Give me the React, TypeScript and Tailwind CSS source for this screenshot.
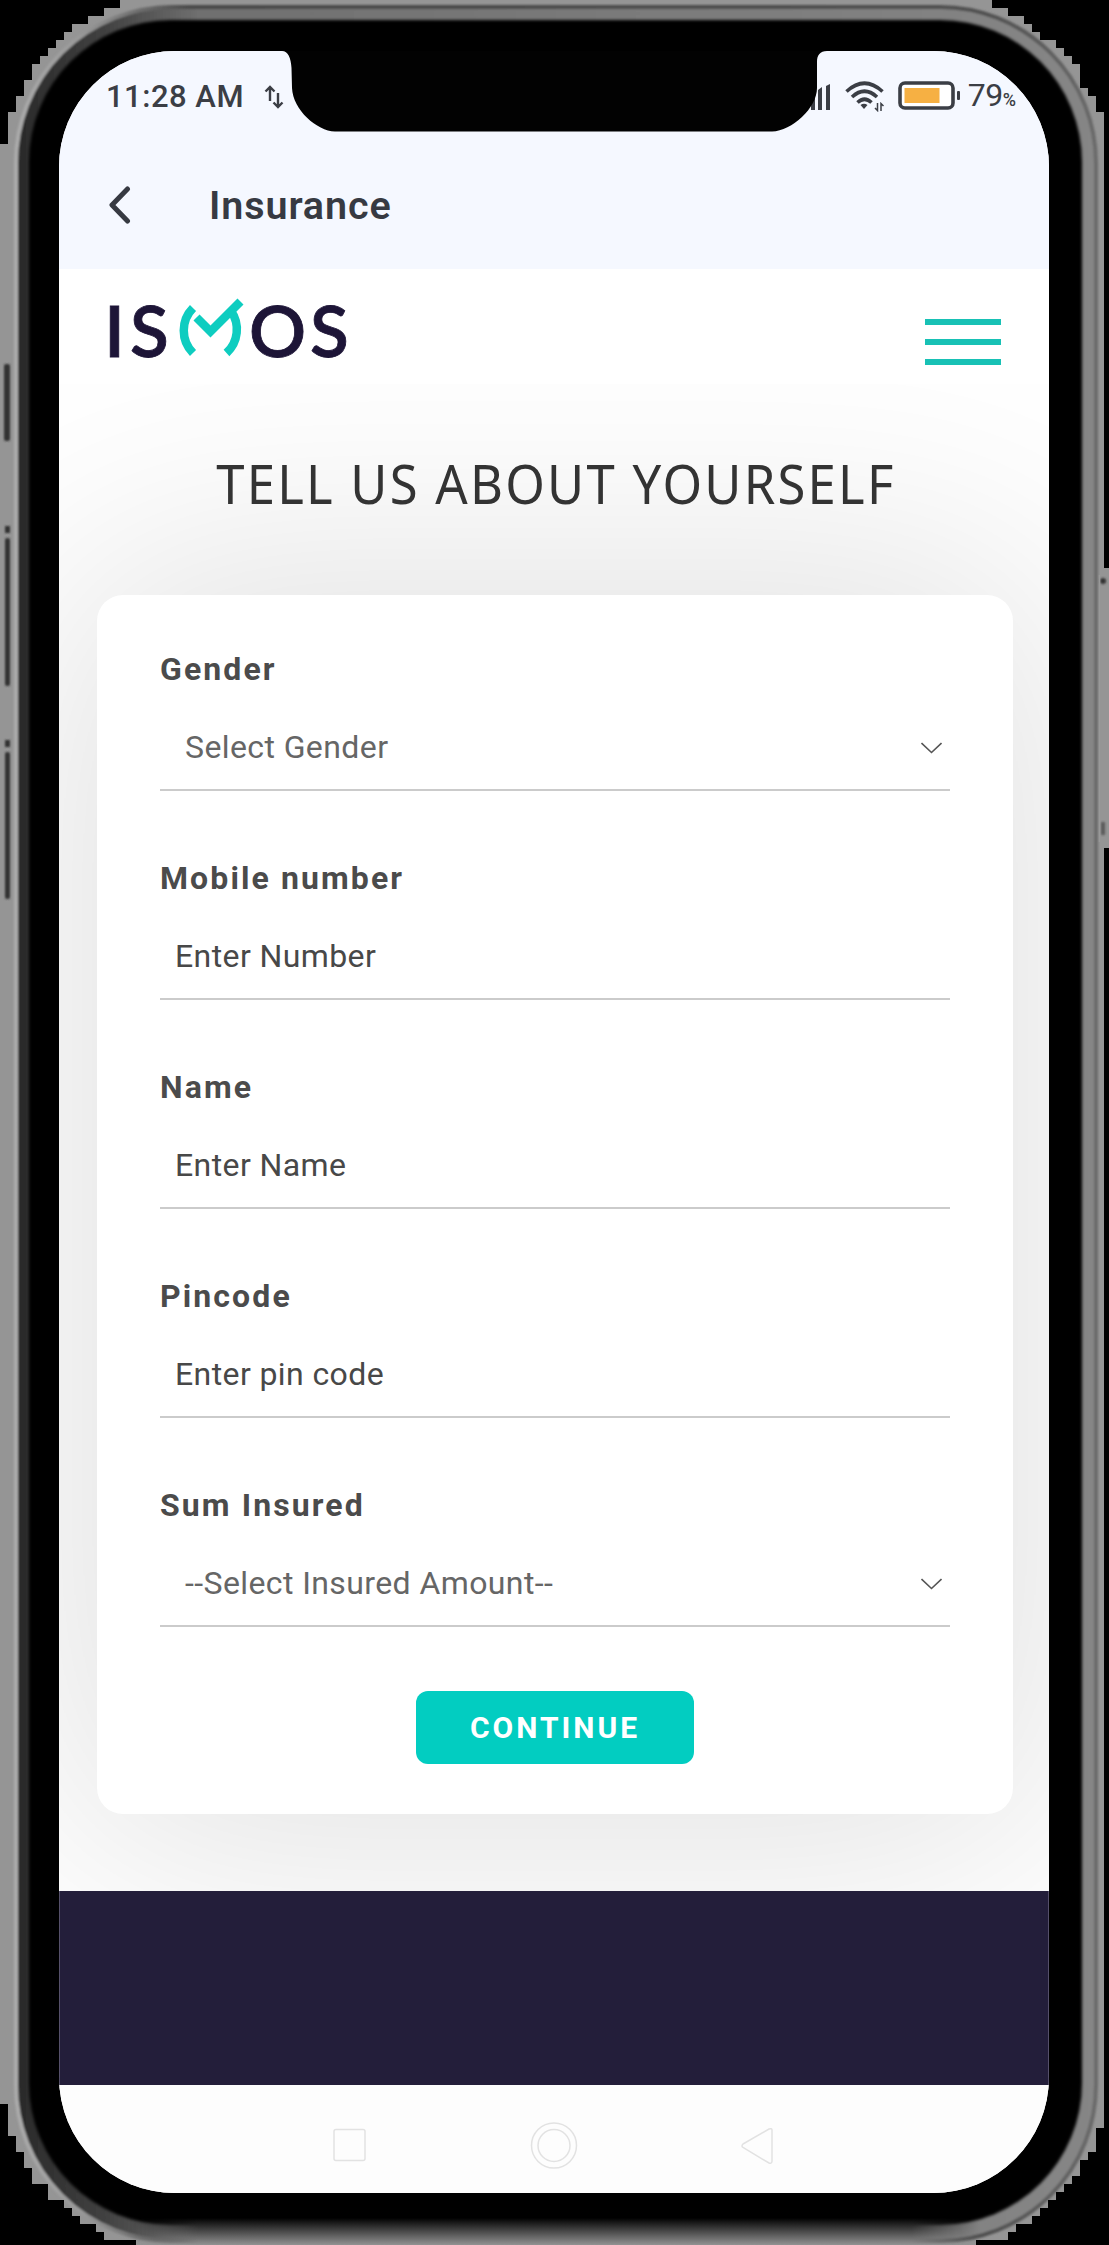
import React from "react";

type FieldProps = { label: string; text: string; select?: boolean };

function Field({ label, text, select }: FieldProps) {
  return (
    <div className="flex h-[209px] flex-col">
      <label className="h-[38px] text-[32px] leading-[38px] font-bold tracking-[2.1px] text-[#4b4b4b]">
        {label}
      </label>
      <div
        className={
          select
            ? "mt-[24px] flex h-[79px] items-center justify-between border-b-2 border-[#cbcbcb] pr-[8px] pl-[25px] text-[#666]"
            : "mt-[24px] flex h-[79px] items-center border-b-2 border-[#cbcbcb] pl-[15px] text-[#484848]"
        }
      >
        <span className="-mt-[8px] text-[32px] leading-[38px] tracking-[0.4px]">{text}</span>
        {select && (
          <svg width="21" height="12" viewBox="0 0 21 12" fill="none" stroke="#555" strokeWidth="1.6" className="-mt-[5px]">
            <path d="M0.5 1 L10.5 10.500 L20.5 1" />
          </svg>
        )}
      </div>
    </div>
  );
}

function PhoneBody() {
  return (
    <svg className="pointer-events-none absolute inset-0" width="1109" height="2245" viewBox="0 0 1109 2245">
      <defs>
        <linearGradient id="edge" x1="0" y1="0" x2="1" y2="0">
          <stop offset="0" stopColor="#acacac" />
          <stop offset="0.06" stopColor="#999" />
          <stop offset="0.16" stopColor="#4a4a4a" />
          <stop offset="0.9" stopColor="#505050" />
          <stop offset="1" stopColor="#6a6a6a" />
        </linearGradient>
        <linearGradient id="band" x1="0" y1="0" x2="1" y2="0">
          <stop offset="0" stopColor="#2a2a2a" />
          <stop offset="0.08" stopColor="#404040" />
          <stop offset="0.17" stopColor="#707070" />
          <stop offset="1" stopColor="#868686" />
        </linearGradient>
        <linearGradient id="foot" x1="0" y1="0" x2="0" y2="1">
          <stop offset="0" stopColor="#000" />
          <stop offset="0.5" stopColor="#4a4a4a" />
          <stop offset="1" stopColor="#929292" />
        </linearGradient>
        <linearGradient id="fade" x1="0" y1="0" x2="1" y2="0">
          <stop offset="0" stopColor="#000" />
          <stop offset="0.08" stopColor="#fff" />
          <stop offset="0.92" stopColor="#fff" />
          <stop offset="1" stopColor="#000" />
        </linearGradient>
        <mask id="footFade">
          <rect x="130" y="2215" width="850" height="30" fill="url(#fade)" />
        </mask>
        <filter id="soft1" x="-5%" y="-5%" width="110%" height="110%">
          <feGaussianBlur stdDeviation="1" />
        </filter>
        <filter id="soft2" x="-5%" y="-5%" width="110%" height="110%">
          <feGaussianBlur stdDeviation="1.5" />
        </filter>
        <clipPath id="silhouette">
          <path d="M120 0H992V8H1008V16H1024V24H1032V32H1040V40H1056V48H1064V56H1072V64H1080V88H1088V96H1096V112H1104V568H1109V848H1104V2128H1096V2152H1088V2160H1080V2176H1072V2184H1064V2192H1056V2200H1048V2208H1040V2216H1032V2224H1016V2232H1008V2240H976V2245H136V2240H104V2232H96V2224H80V2216H72V2208H64V2200H48V2184H32V2168H24V2152H16V2136H8V2104H0V144H8V112H16V96H24V80H32V64H40V56H48V48H56V40H64V32H72V24H88V16H104V8H120Z" />
        </clipPath>
      </defs>
      <g clipPath="url(#silhouette)">
        <rect width="1109" height="2245" fill="#959595" />
        <rect x="16" y="7" width="1080" height="2234" rx="156" fill="url(#band)" stroke="url(#edge)" strokeWidth="4" filter="url(#soft1)" />
        <rect x="29" y="20" width="1053" height="2205" rx="142" fill="#020202" filter="url(#soft2)" />
        <rect x="130" y="2218" width="850" height="27" fill="url(#foot)" mask="url(#footFade)" />
        <g fill="#333" filter="url(#soft1)">
          <rect x="4" y="364" width="6" height="77" rx="2" />
          <rect x="5" y="526" width="5" height="7" />
          <rect x="5" y="538" width="5" height="148" rx="2" />
          <rect x="5" y="740" width="5" height="7" />
          <rect x="5" y="752" width="5" height="147" rx="2" />
          <circle cx="1103" cy="581" r="3" />
          <rect x="1101" y="822" width="4" height="13" opacity=".6" />
        </g>
        <path d="M1099.5 575V842" stroke="#999" strokeWidth="1.5" />
      </g>
    </svg>
  );
}

function Notch() {
  return (
    <svg className="absolute top-0 left-[220px]" width="552" height="82" viewBox="279 51 552 82">
      <path
        d="M279 50V51H282C288 51 291 58 291.500 68L292 88C293 110 317 131 335 131.500H772C792 131 817 108 817 88V62C817 55 820 51 827 51H831V50Z"
        fill="#020202"
      />
    </svg>
  );
}

function StatusBar() {
  return (
    <div className="flex h-[90px] items-center pt-px text-[#3b3e45]">
      <span className="ml-[47px] w-[142px] text-[31px] leading-[36px] font-medium tracking-[0.5px] whitespace-nowrap">11:28 AM</span>
      <svg className="ml-[16px]" width="20" height="26" viewBox="0 0 20 26" fill="none" stroke="currentColor" strokeWidth="2.400">
        <path d="M6 17V3M1.500 7.500L6 3L10.500 7.500M14 9V23M9.500 18.500L14 23L18.500 18.500" />
      </svg>
      <svg className="mr-[14px] ml-auto" width="20" height="26" viewBox="0 0 20 26" fill="currentColor">
        <path d="M0 12L4 9V26H0ZM7 6L11 3V26H7ZM15 2L19 0V26H15Z" />
      </svg>
      <svg className="mr-[14px]" width="39" height="31" viewBox="0 0 39 31" fill="none" stroke="currentColor" strokeWidth="3.600">
        <path d="M1.500 10.500Q19.500 -6 37.500 10.500M7 16Q19.500 4.500 32 16M12.500 21.500Q19.500 15 26.500 21.500" />
        <path d="M15.500 24Q19 21.500 22.500 24L19 28Z" fill="currentColor" stroke="none" />
        <path d="M32.500 22V29.500L30 27M36 30V22.500L38.500 25" strokeWidth="1.500" />
      </svg>
      <svg className="mr-[6px] -mt-[2px]" width="64" height="30" viewBox="0 0 64 30">
        <rect x="2" y="2" width="53" height="25" rx="5" fill="#fff" stroke="currentColor" strokeWidth="3.600" />
        <rect x="6.500" y="7" width="35" height="15" fill="#f6b043" />
        <rect x="59" y="10" width="3" height="9" rx="1" fill="currentColor" />
      </svg>
      <span className="mt-[2px] mr-[33px] flex items-baseline leading-[36px]">
        <span className="text-[32px] tracking-[-0.5px]">79</span>
        <span className="text-[18px] font-medium">%</span>
      </span>
    </div>
  );
}

function Logo() {
  return (
    <svg className="ml-[47px]" width="250" height="100" viewBox="16 0 250 100">
      <g fill="#1d1537" stroke="#1d1537" strokeWidth="0.8" fontFamily="Lato" fontWeight="600" fontSize="71">
        <text x="14" y="76.500" textLength="21" lengthAdjust="spacingAndGlyphs">I</text>
        <text x="40" y="76.500">S</text>
        <text x="159" y="76.500">O</text>
        <text x="220" y="76.500">S</text>
      </g>
      <g fill="none" stroke="#0ecdc0" strokeWidth="8.500">
        <path d="M103 28A32 32 0 0 0 103 73" />
        <path d="M106.500 37.500L120.500 51.500L150.500 21.500" />
        <path d="M141 31A32 32 0 0 1 136.500 73" />
      </g>
    </svg>
  );
}

export default function App() {
  return (
    <div
      className="relative h-[2245px] w-[1109px] overflow-hidden bg-black"
      style={{ fontFamily: 'Roboto, "Liberation Sans", sans-serif' }}
    >
      <PhoneBody />
      <div className="relative mt-[51px] ml-[59px] flex h-[2142px] w-[990px] flex-col overflow-hidden rounded-[116px] bg-white">
        <header className="h-[218px] bg-[#f5f8ff]">
          <StatusBar />
          <div className="flex h-[128px] items-center text-[#373a42]">
            <svg className="ml-[49px]" width="24" height="38" viewBox="0 0 24 38" fill="none" stroke="currentColor" strokeWidth="5" strokeLinecap="round" strokeLinejoin="round">
              <path d="M19.500 3L4 19L19.500 35" />
            </svg>
            <h1 className="mt-[2px] ml-[77px] text-[39.500px] leading-[44px] font-semibold tracking-[0.9px]">Insurance</h1>
          </div>
        </header>
        <div className="flex h-[115px] items-start justify-between">
          <div className="mt-[11px]"><Logo /></div>
          <div className="mt-[50px] mr-[48px] flex w-[76px] flex-col gap-[14px]">
            <span className="h-[6px] bg-[#18c1b5]" />
            <span className="h-[6px] bg-[#18c1b5]" />
            <span className="h-[6px] bg-[#18c1b5]" />
          </div>
        </div>
        <main className="flex h-[1507px] flex-col overflow-hidden bg-white">
          <h2
            className="mt-[64px] scale-x-[0.94] pl-[4px] text-center text-[54px] leading-[70px] tracking-[2.400px] whitespace-nowrap text-[#333]"
            style={{ fontFamily: '"Noto Sans", "Open Sans", sans-serif' }}
          >
            TELL US ABOUT YOURSELF
          </h2>
          <form className="mt-[77px] ml-[38px] flex h-[1219px] w-[916px] flex-col rounded-[26px] bg-white px-[63px] pt-[55px] shadow-[0_0_300px_30px_rgba(0,0,0,0.12)]">
            <Field label="Gender" text="Select Gender" select />
            <Field label="Mobile number" text="Enter Number" />
            <Field label="Name" text="Enter Name" />
            <Field label="Pincode" text="Enter pin code" />
            <Field label="Sum Insured" text="--Select Insured Amount--" select />
            <button
              type="button"
              className="-mt-[4px] h-[73px] w-[278px] self-center rounded-[12px] bg-[#02cdc1] text-[30px] leading-[36px] font-bold tracking-[3px] text-white"
            >
              CONTINUE
            </button>
          </form>
        </main>
        <footer className="h-[194px] border-x border-[#55506a] bg-[#231e3a]" />
        <nav className="relative h-[108px] bg-[#fdfdfd]">
          <svg className="ml-[273px]" width="442" height="108" viewBox="332 2085 442 108" fill="none" stroke="#e2e2e2" strokeWidth="1.500">
            <rect x="334" y="2129.500" width="31" height="31" rx="2" />
            <circle cx="554" cy="2145.500" r="22.500" />
            <circle cx="554" cy="2145.500" r="16" />
            <path d="M743 2144L769 2129Q772 2128 772 2130V2161Q772 2164 769 2163L743 2147.500Q741 2146 743 2144Z" />
          </svg>
        </nav>
        <Notch />
      </div>
    </div>
  );
}
